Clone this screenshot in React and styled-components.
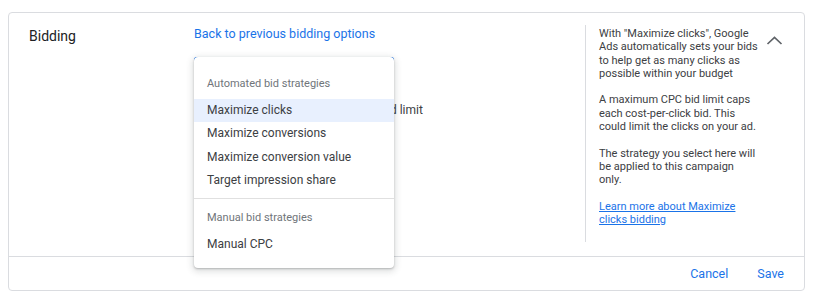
import React from "react";
import styled, { createGlobalStyle } from "styled-components";

const GlobalStyle = createGlobalStyle`
  html, body {
    margin: 0;
    padding: 0;
    background: #fff;
  }
  body {
    font-family: Roboto, "Liberation Sans", Arial, sans-serif;
    color: #202124;
  }
`;

const Card = styled.div`
  box-sizing: border-box;
  width: 797px;
  margin: 12px 0 0 8px;
  border: 1px solid #dadce0;
  border-radius: 4px;
  background: #fff;
`;

const Body = styled.div`
  display: grid;
  grid-template-columns: 185px 391px 172px auto;
  padding: 12px 0 14px;
`;

const Label = styled.div`
  padding-left: 20px;
  font-size: 14px;
  line-height: 22px;
  color: #202124;
`;

const Main = styled.div`
  position: relative;
`;

const BackLink = styled.a`
  display: block;
  font-size: 12.5px;
  line-height: 18px;
  color: #1a73e8;
  text-decoration: none;
  cursor: pointer;
`;

const SelectField = styled.div`
  box-sizing: border-box;
  width: 200px;
  height: 36px;
  margin-top: 14px;
  border: 1px solid #1a73e8;
  border-radius: 2px;
`;

const CheckRow = styled.label`
  display: flex;
  align-items: center;
  gap: 8px;
  margin-top: 7px;
  font-size: 12px;
  line-height: 20px;
  color: #3c4043;
  white-space: nowrap;
`;

const Box = styled.span`
  width: 14px;
  height: 14px;
  border: 2px solid #5f6368;
  border-radius: 2px;
`;

const Menu = styled.div`
  position: absolute;
  top: 32px;
  left: 0;
  box-sizing: border-box;
  width: 200px;
  height: 211px;
  padding: 17px 0 12px;
  background: #fff;
  border-radius: 4px;
  box-shadow: 0 1px 2px rgba(60, 64, 67, 0.3), 0 2px 6px 2px rgba(60, 64, 67, 0.15);
`;

const GroupTitle = styled.div`
  height: 20px;
  line-height: 20px;
  margin-bottom: 5px;
  padding-left: 13px;
  font-size: 11px;
  color: #70757a;
`;

const Item = styled.div`
  height: 23.4px;
  line-height: 23.4px;
  padding-left: 13px;
  font-size: 12px;
  color: #3c4043;
  background: ${({ $active }) => ($active ? "#e8f0fe" : "transparent")};
`;

const MenuDivider = styled.div`
  height: 1px;
  margin: 5px 0 9px;
  background: #e0e0e0;
`;

const Aside = styled.div`
  box-sizing: border-box;
  height: 217px;
  border-left: 1px solid #dadce0;
  padding: 2px 0 0 13px;
  font-size: 11px;
  line-height: 13.3px;
  color: #3c4043;
  white-space: nowrap;

  p {
    margin: 0 0 13.3px;
  }
`;

const HelpLink = styled.a`
  color: #1a73e8;
  text-decoration: underline;
  cursor: pointer;
`;

const Toggle = styled.div`
  padding: 4px 0 0 5px;
  color: #5f6368;
`;

const Footer = styled.div`
  display: flex;
  justify-content: flex-end;
  align-items: center;
  gap: 29px;
  height: 33px;
  padding-right: 20px;
  border-top: 1px solid #dadce0;
`;

const TextButton = styled.button`
  border: 0;
  padding: 0;
  background: none;
  font-family: inherit;
  font-size: 12.5px;
  color: #1a73e8;
  cursor: pointer;
`;

const automated = [
  "Maximize clicks",
  "Maximize conversions",
  "Maximize conversion value",
  "Target impression share",
];

export default function App() {
  return (
    <>
      <GlobalStyle />
      <Card>
        <Body>
          <Label>Bidding</Label>
          <Main>
            <BackLink>Back to previous bidding options</BackLink>
            <SelectField />
            <CheckRow>
              <Box />
              Set a maximum cost per click bid limit
            </CheckRow>
            <Menu>
              <GroupTitle>Automated bid strategies</GroupTitle>
              {automated.map((name, i) => (
                <Item key={name} $active={i === 0}>
                  {name}
                </Item>
              ))}
              <MenuDivider />
              <GroupTitle>Manual bid strategies</GroupTitle>
              <Item>Manual CPC</Item>
            </Menu>
          </Main>
          <Aside>
            <p>
              With "Maximize clicks", Google
              <br />
              Ads automatically sets your bids
              <br />
              to help get as many clicks as
              <br />
              possible within your budget
            </p>
            <p>
              A maximum CPC bid limit caps
              <br />
              each cost-per-click bid. This
              <br />
              could limit the clicks on your ad.
            </p>
            <p>
              The strategy you select here will
              <br />
              be applied to this campaign
              <br />
              only.
            </p>
            <HelpLink>
              Learn more about Maximize
              <br />
              clicks bidding
            </HelpLink>
          </Aside>
          <Toggle>
            <svg width="24" height="24" viewBox="0 0 24 24" fill="none">
              <polyline
                points="5.5,15 12.5,8.5 19.5,15"
                stroke="currentColor"
                strokeWidth="1.7"
              />
            </svg>
          </Toggle>
        </Body>
        <Footer>
          <TextButton>Cancel</TextButton>
          <TextButton>Save</TextButton>
        </Footer>
      </Card>
    </>
  );
}
